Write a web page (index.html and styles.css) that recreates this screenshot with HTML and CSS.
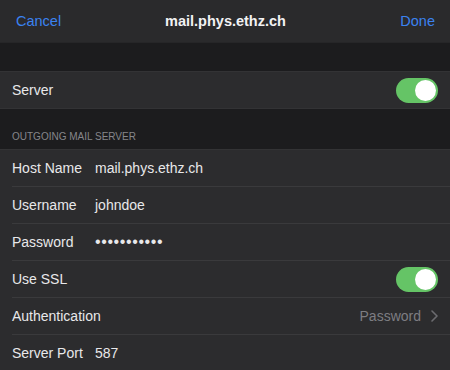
FILE: index.html
```html
<!DOCTYPE html>
<html lang="en">
<head>
    <meta charset="UTF-8">
    <title>mail.phys.ethz.ch</title>
    <link rel="stylesheet" href="styles.css">
</head>
<body>
    <div class="navbar">
        <span class="nav-btn">Cancel</span>
        <span class="nav-title">mail.phys.ethz.ch</span>
        <span class="nav-btn done">Done</span>
    </div>

    <div class="gap"></div>

    <div class="group">
        <div class="row">
            <span class="label">Server</span>
            <span class="toggle on"><span class="knob"></span></span>
        </div>
    </div>

    <div class="section-header">OUTGOING MAIL SERVER</div>

    <div class="group">
        <div class="row">
            <span class="label">Host Name</span>
            <span class="value">mail.phys.ethz.ch</span>
        </div>
        <div class="row">
            <span class="label">Username</span>
            <span class="value">johndoe</span>
        </div>
        <div class="row">
            <span class="label">Password</span>
            <span class="value dots">&bull;&bull;&bull;&bull;&bull;&bull;&bull;&bull;&bull;&bull;&bull;</span>
        </div>
        <div class="row">
            <span class="label">Use SSL</span>
            <span class="toggle on"><span class="knob"></span></span>
        </div>
        <div class="row">
            <span class="label">Authentication</span>
            <span class="detail">Password</span>
            <svg class="chevron" width="7" height="12" viewBox="0 0 7 12">
                <path d="M1 1l5 5-5 5" fill="none" stroke="#6c6c70" stroke-width="1.6" stroke-linecap="round" stroke-linejoin="round"/>
            </svg>
        </div>
        <div class="row">
            <span class="label">Server Port</span>
            <span class="value">587</span>
        </div>
    </div>
</body>
</html>
```

FILE: styles.css
```css
body {
    margin: 0;
    background-color: #1c1c1e;
    font-family: "Liberation Sans", Arial, sans-serif;
    color: #e8e8ea;
    font-size: 14px;
}
.navbar {
    height: 42px;
    background-color: #2a2a2c;
    display: flex;
    align-items: center;
    justify-content: space-between;
    padding: 0 15px 0 16px;
    border-bottom: 1px solid #262628;
}
.nav-btn {
    color: #3b82f0;
    font-size: 14.5px;
    width: 70px;
}
.nav-btn.done {
    text-align: right;
}
.nav-title {
    font-weight: bold;
    font-size: 14.5px;
    color: #f2f2f4;
}
.gap {
    height: 28px;
}
.group {
    background-color: #2c2c2e;
    border-top: 1px solid #333335;
    border-bottom: 1px solid #333335;
}
.row {
    height: 36px;
    margin-left: 12px;
    padding-right: 12px;
    display: flex;
    align-items: center;
    border-bottom: 1px solid #3a3a3c;
}
.row:last-child {
    border-bottom: none;
}
.label {
    width: 83px;
    flex-shrink: 0;
}
.value {
    flex: 1;
}
.dots {
    font-size: 16px;
    letter-spacing: 0.6px;
}
.detail {
    flex: 1;
    text-align: right;
    color: #7d7d82;
    margin-right: 10px;
}
.chevron {
    display: block;
}
.toggle {
    margin-left: auto;
    width: 42px;
    height: 25px;
    border-radius: 13px;
    background-color: #65c466;
    position: relative;
}
.toggle .knob {
    position: absolute;
    top: 2px;
    right: 2px;
    width: 21px;
    height: 21px;
    border-radius: 50%;
    background: #fff;
}
.section-header {
    padding: 22px 12px 6px;
    font-size: 10px;
    line-height: 12px;
    color: #86868b;
}
```
